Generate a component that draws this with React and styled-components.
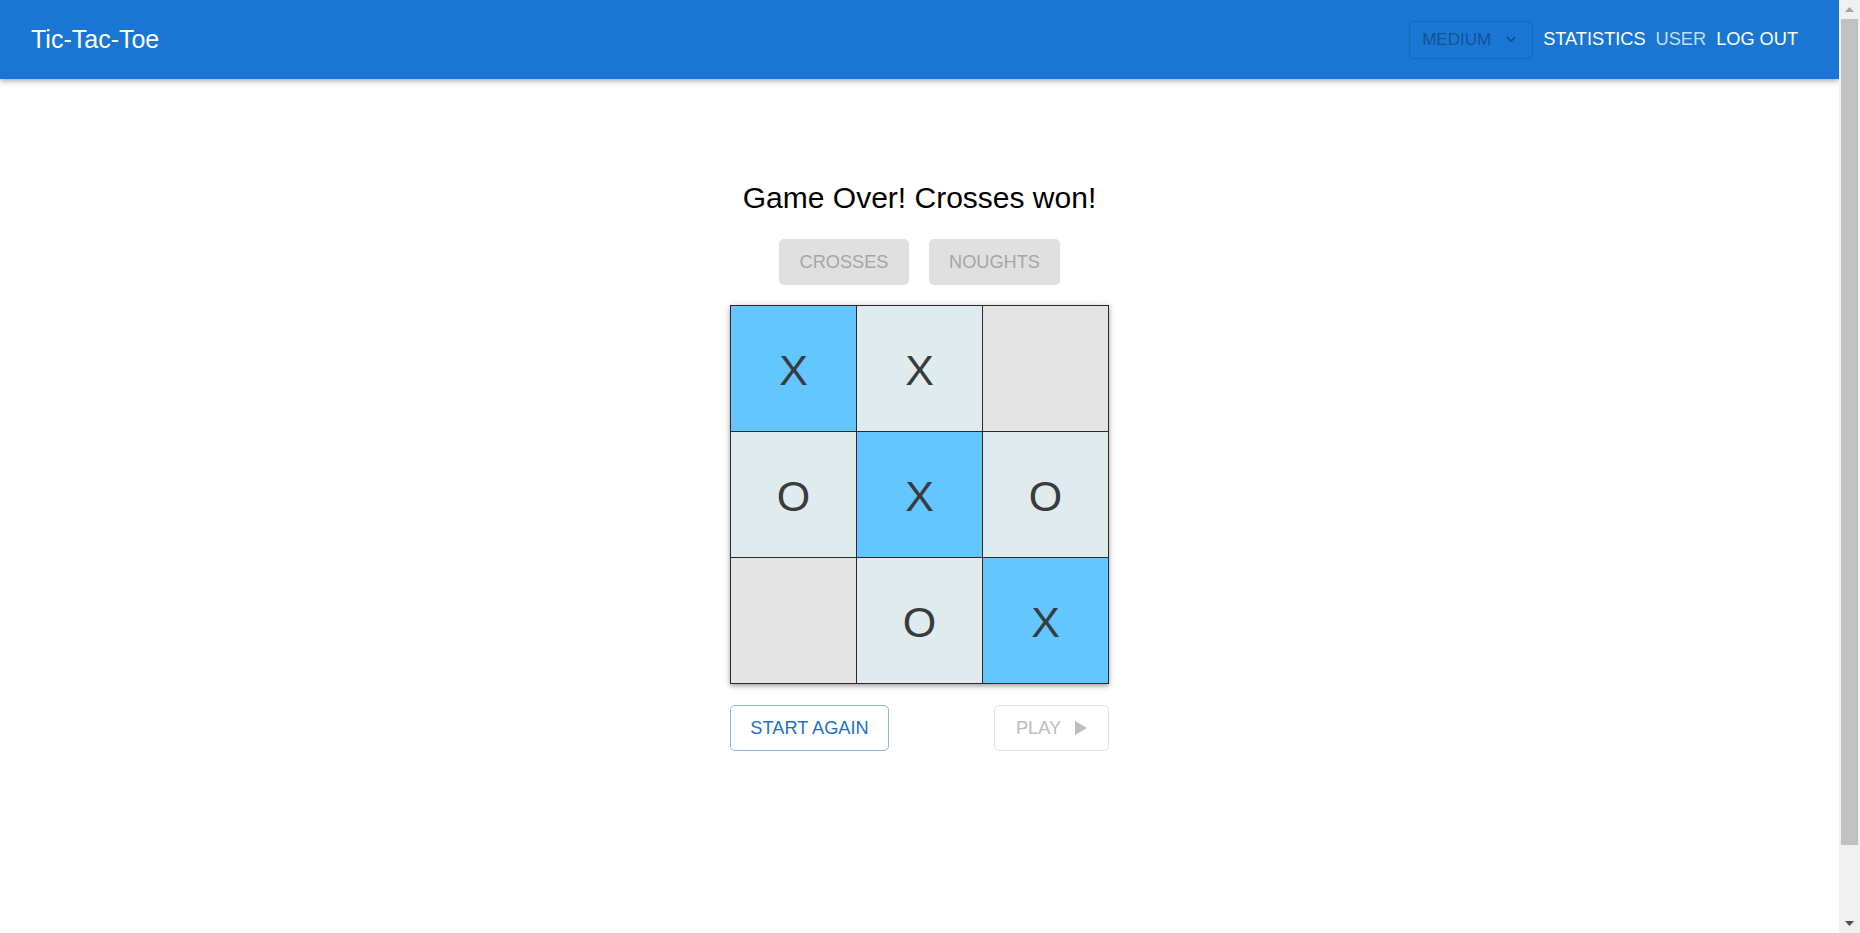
import React from 'react';
import styled, { createGlobalStyle, css } from 'styled-components';

const GlobalStyle = createGlobalStyle`
  html, body {
    margin: 0;
    padding: 0;
    height: 100%;
    overflow: hidden;
    background: #fff;
  }
  body {
    font-family: "Liberation Sans", Arial, sans-serif;
  }
`;

const Shell = styled.div`
  display: flex;
  height: 100vh;
`;

const Page = styled.div`
  flex: 1;
  display: flex;
  flex-direction: column;
  min-width: 0;
`;

const AppBar = styled.header`
  height: 79px;
  background: #1976d2;
  color: #fff;
  display: flex;
  align-items: center;
  padding: 0 41px 0 31px;
  box-sizing: border-box;
  box-shadow: 0 2px 4px -1px rgba(0, 0, 0, 0.2), 0 4px 5px 0 rgba(0, 0, 0, 0.14);
`;

const Title = styled.div`
  flex: 1;
  font-size: 25px;
`;

const Nav = styled.nav`
  display: flex;
  align-items: center;
  gap: 10px;
`;

const Select = styled.div`
  width: 124px;
  height: 38px;
  box-sizing: border-box;
  border: 1px solid rgba(0, 0, 0, 0.12);
  border-radius: 5px;
  display: flex;
  align-items: center;
  justify-content: space-between;
  padding: 0 16px 0 12px;
  color: rgba(0, 0, 0, 0.32);
  font-size: 17px;
`;

const NavButton = styled.button`
  background: none;
  border: none;
  padding: 0;
  font-family: inherit;
  font-size: 18.2px;
  color: ${p => (p.$dim ? '#c6dcf2' : '#fff')};
  cursor: pointer;
`;

const Main = styled.main`
  display: flex;
  flex-direction: column;
  align-items: center;
  padding-top: 102px;
`;

const Heading = styled.h1`
  margin: 0;
  font-size: 30px;
  font-weight: normal;
  line-height: 34px;
  color: #000;
`;

const SideRow = styled.div`
  display: flex;
  gap: 20px;
  margin-top: 24px;
`;

const baseButton = css`
  height: 46px;
  box-sizing: border-box;
  border-radius: 5px;
  font-family: inherit;
  font-size: 18.2px;
  display: inline-flex;
  align-items: center;
  justify-content: center;
  gap: 14px;
`;

const SideButton = styled.button`
  ${baseButton}
  width: ${p => p.$w}px;
  border: none;
  background: #e0e0e0;
  color: #a6a6a6;
`;

const Board = styled.div`
  margin-top: 20px;
  display: grid;
  grid-template-columns: repeat(3, 125px);
  grid-auto-rows: 125px;
  gap: 1px;
  padding: 1px;
  background: #2a2a2a;
  box-shadow: 0 2px 4px rgba(0, 0, 0, 0.3), 0 1px 10px rgba(0, 0, 0, 0.12);
`;

const cellColors = {
  win: '#63c6ff',
  filled: '#e0ebed',
  empty: '#e4e4e4',
};

const Cell = styled.div`
  background: ${p => cellColors[p.$kind]};
  display: flex;
  align-items: center;
  justify-content: center;
  padding-top: 3px;
  font-size: 43px;
  color: #383c40;
`;

const BottomRow = styled.div`
  width: 379px;
  margin-top: 21px;
  display: flex;
  justify-content: space-between;
`;

const OutlineButton = styled.button`
  ${baseButton}
  width: ${p => p.$w}px;
  background: #fff;
  border: 1px solid ${p => (p.$disabled ? '#e2e2e2' : '#8db5e2')};
  color: ${p => (p.$disabled ? '#bdbdbd' : '#1f6fc6')};
`;

const ScrollTrack = styled.div`
  width: 21px;
  background: #f0f0f0;
  display: flex;
  flex-direction: column;
  align-items: center;
`;

const ScrollArrow = styled.div`
  height: 19px;
  display: flex;
  align-items: center;
  justify-content: center;
  color: ${p => p.$color};
`;

const ScrollThumb = styled.div`
  width: 17px;
  height: 826px;
  background: #c1c1c1;
`;

const ScrollRest = styled.div`
  flex: 1;
`;

const board = [
  ['X', 'win'], ['X', 'filled'], ['', 'empty'],
  ['O', 'filled'], ['X', 'win'], ['O', 'filled'],
  ['', 'empty'], ['O', 'filled'], ['X', 'win'],
];

function Chevron() {
  return (
    <svg width="10" height="7" viewBox="0 0 10 7">
      <path d="M1 1.2 L5 5.2 L9 1.2" fill="none" stroke="currentColor" strokeWidth="1.8" />
    </svg>
  );
}

function Triangle({ up }) {
  return (
    <svg width="9" height="5" viewBox="0 0 9 5">
      <path d={up ? 'M0 5 L4.5 0 L9 5 Z' : 'M0 0 L4.5 5 L9 0 Z'} fill="currentColor" />
    </svg>
  );
}

export default function App() {
  return (
    <Shell>
      <GlobalStyle />
      <Page>
        <AppBar>
          <Title>Tic-Tac-Toe</Title>
          <Nav>
            <Select>
              <span>MEDIUM</span>
              <Chevron />
            </Select>
            <NavButton>STATISTICS</NavButton>
            <NavButton $dim>USER</NavButton>
            <NavButton>LOG OUT</NavButton>
          </Nav>
        </AppBar>
        <Main>
          <Heading>Game Over! Crosses won!</Heading>
          <SideRow>
            <SideButton $w={130} disabled>CROSSES</SideButton>
            <SideButton $w={131} disabled>NOUGHTS</SideButton>
          </SideRow>
          <Board>
            {board.map(([mark, kind], i) => (
              <Cell key={i} $kind={kind}>{mark}</Cell>
            ))}
          </Board>
          <BottomRow>
            <OutlineButton $w={159}>START AGAIN</OutlineButton>
            <OutlineButton $w={115} $disabled>
              PLAY
              <svg width="12" height="14" viewBox="0 0 12 14">
                <path d="M0 0 L12 7 L0 14 Z" fill="#bdbdbd" />
              </svg>
            </OutlineButton>
          </BottomRow>
        </Main>
      </Page>
      <ScrollTrack>
        <ScrollArrow $color="#a3a3a3"><Triangle up /></ScrollArrow>
        <ScrollThumb />
        <ScrollRest />
        <ScrollArrow $color="#505050"><Triangle /></ScrollArrow>
      </ScrollTrack>
    </Shell>
  );
}
